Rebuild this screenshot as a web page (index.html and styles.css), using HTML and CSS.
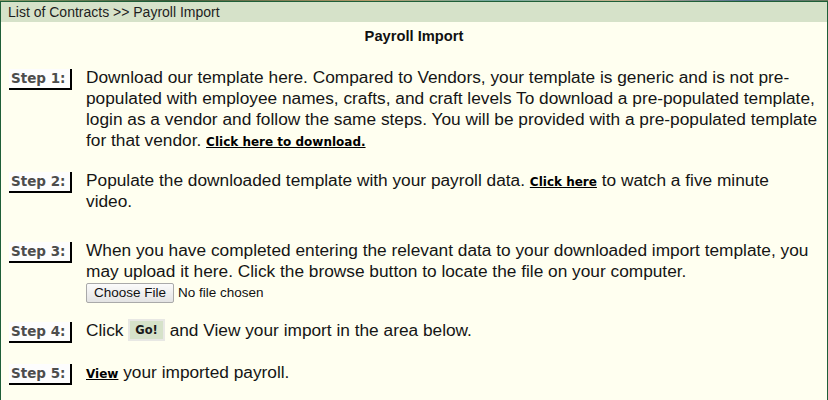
FILE: index.html
```html
<!DOCTYPE html>
<html>
<head>
<meta charset="utf-8">
<link rel="stylesheet" href="styles.css">
</head>
<body>
<div class="banner"></div>
<div class="page">
  <div class="crumb">List of Contracts &gt;&gt; Payroll Import</div>
  <div class="title">Payroll Import</div>
  <div class="steps">
    <div class="step step-1">
      <div class="label">Step 1:</div>
      <div class="text">Download our template here. Compared to Vendors, your template is generic and is not pre-populated with employee names, crafts, and craft levels To download a pre-populated template, login as a vendor and follow the same steps. You will be provided with a pre-populated template for that vendor. <a class="link" href="#">Click here to download.</a></div>
    </div>
    <div class="step step-2">
      <div class="label">Step 2:</div>
      <div class="text">Populate the downloaded template with your payroll data. <a class="link" href="#">Click here</a> to watch a five minute<br>video.</div>
    </div>
    <div class="step step-3">
      <div class="label">Step 3:</div>
      <div class="text">When you have completed entering the relevant data to your downloaded import template, you may upload it here. Click the browse button to locate the file on your computer.
        <div class="file"><span class="file-btn">Choose File</span><span class="file-name">No file chosen</span></div>
      </div>
    </div>
    <div class="step step-4">
      <div class="label">Step 4:</div>
      <div class="text">Click <span class="go">Go!</span> and View your import in the area below.</div>
    </div>
    <div class="step step-5">
      <div class="label">Step 5:</div>
      <div class="text"><a class="link" href="#">View</a> your imported payroll.</div>
    </div>
  </div>
</div>
</body>
</html>
```
FILE: styles.css
```css
html, body {
  margin: 0;
  padding: 0;
  background: #fffff0;
}
.banner {
  height: 1px;
  background: linear-gradient(90deg, #8a9a6a 0%, #3d5a3a 20%, #b59a6a 45%, #6fa8a0 60%, #c9b08a 75%, #4f6f8f 90%, #6a7a5a 100%);
}
.page {
  border: 1px solid #1f5f38;
  border-bottom: none;
  background: #fffff0;
  height: 398px;
  overflow: hidden;
  font-family: "Liberation Sans", Arial, sans-serif;
  color: #151515;
}
.crumb {
  background: #d6e2c9;
  height: 20px;
  line-height: 20px;
  padding-left: 7px;
  font-size: 14px;
  color: #1e1e1e;
}
.title {
  text-align: center;
  font-weight: bold;
  font-size: 14.7px;
  line-height: 20px;
  margin-top: 4px;
  color: #111;
}
.steps {
  display: flex;
  flex-direction: column;
  padding: 21px 5px 0 8px;
}
.step {
  display: flex;
  align-items: flex-start;
}
.step-1 { margin-bottom: 19px; }
.step-2 { margin-bottom: 28px; }
.step-3 { margin-bottom: 17px; }
.step-4 { margin-bottom: 19px; }
.label {
  flex: none;
  width: 59px;
  height: 19px;
  line-height: 19px;
  padding-left: 2px;
  margin-top: 2px;
  margin-right: 14px;
  background: #fdfdfd;
  border-right: 2px solid #000;
  border-bottom: 2px solid #000;
  font-family: "DejaVu Sans", Verdana, sans-serif;
  font-weight: bold;
  font-size: 13.5px;
  color: #4d4d4d;
}
.text {
  flex: 1;
  font-size: 17.3px;
  line-height: 21px;
}
.link {
  font-family: "DejaVu Sans", Verdana, sans-serif;
  font-weight: bold;
  font-size: 12px;
  line-height: 1;
  color: #000;
  text-decoration: underline;
}
.file {
  display: flex;
  align-items: center;
  height: 21px;
  font-size: 13.5px;
}
.file-btn {
  display: inline-block;
  height: 18px;
  line-height: 18px;
  padding: 0 7px;
  border: 1px solid #a9a9a9;
  border-radius: 2px;
  background: linear-gradient(#fbfbfb, #e3e3e3);
  color: #111;
}
.file-name {
  margin-left: 4px;
  color: #111;
}
.go {
  display: inline-block;
  vertical-align: middle;
  margin: -3px 0 0;
  padding: 0 5px;
  height: 18px;
  line-height: 18px;
  background: #d6e2c9;
  border: 2px solid #e8e8e4;
  font-family: "DejaVu Sans", Verdana, sans-serif;
  font-weight: bold;
  font-size: 11.5px;
  color: #1a1a1a;
}
```
